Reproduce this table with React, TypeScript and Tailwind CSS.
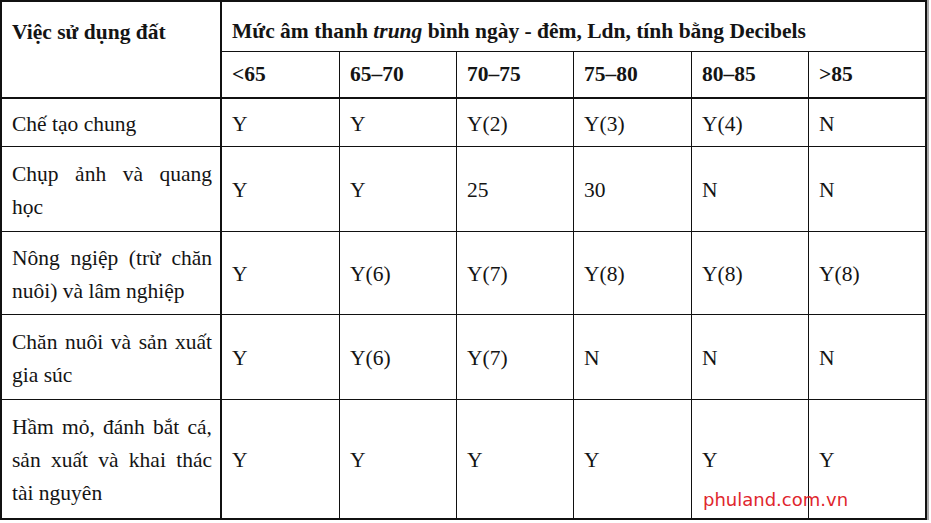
import React from 'react';

const serif = "[font-family:'Liberation_Serif','Times_New_Roman',serif]";

const heads = ['<65', '65–70', '70–75', '75–80', '80–85', '>85'];

const rows: { label: string; values: string[] }[] = [
  { label: 'Chế tạo chung', values: ['Y', 'Y', 'Y(2)', 'Y(3)', 'Y(4)', 'N'] },
  { label: 'Chụp ảnh và quang học', values: ['Y', 'Y', '25', '30', 'N', 'N'] },
  {
    label: 'Nông ngiệp (trừ chăn nuôi) và lâm nghiệp',
    values: ['Y', 'Y(6)', 'Y(7)', 'Y(8)', 'Y(8)', 'Y(8)'],
  },
  { label: 'Chăn nuôi và sản xuất gia súc', values: ['Y', 'Y(6)', 'Y(7)', 'N', 'N', 'N'] },
  {
    label: 'Hầm mỏ, đánh bắt cá, sản xuất và khai thác tài nguyên',
    values: ['Y', 'Y', 'Y', 'Y', 'Y', 'Y'],
  },
];

export default function App() {
  return (
    <div className="relative w-[931px] h-[523px] bg-white overflow-hidden">
      <div
        className={`${serif} text-[21.5px] leading-[33px] text-[#141414] grid grid-cols-[220px_118px_117px_117px_118px_117px_118px] grid-rows-[50px_47px_48px_85px_83px_85px_120px] w-[927px] border-l-2 border-t-2 border-[#111] shadow-[2px_0_0_0_#a8a8a8]`}
      >
        {/* header */}
        <div className="row-span-2 border-r-2 border-b-2 border-[#111] pl-[10px] pt-[14px] font-bold">
          Việc sử dụng đất
        </div>
        <div className="col-span-6 border-r-2 border-b border-[#111] pl-[10px] pt-[13px] font-bold">
          Mức âm thanh <i>trung</i> bình ngày - đêm, Ldn, tính bằng Decibels
        </div>
        {heads.map((h, i) => (
          <div
            key={h}
            className={`flex items-center pl-[10px] font-bold border-b-2 border-[#111] ${
              i === heads.length - 1 ? 'border-r-2' : 'border-r'
            }`}
          >
            {h}
          </div>
        ))}

        {/* body */}
        {rows.map((row, r) => {
          const last = r === rows.length - 1;
          return (
            <React.Fragment key={row.label}>
              <div
                className={`flex items-center pl-[10px] pr-[8px] pt-[3px] border-r-2 border-[#111] ${
                  last ? 'border-b-2' : 'border-b'
                }`}
              >
                <p className="w-full text-justify">{row.label}</p>
              </div>
              {row.values.map((v, i) => (
                <div
                  key={i}
                  className={`flex items-center pl-[10px] pt-[3px] border-[#111] ${
                    last ? 'border-b-2' : 'border-b'
                  } ${i === row.values.length - 1 ? 'border-r-2' : 'border-r'}`}
                >
                  {v}
                </div>
              ))}
            </React.Fragment>
          );
        })}
      </div>

      {/* watermark */}
      <span className="absolute left-[703px] top-[489px] [font-family:'DejaVu_Sans',sans-serif] text-[18px] leading-[21px] text-[#e0262d]">
        phuland.com.vn
      </span>
    </div>
  );
}
